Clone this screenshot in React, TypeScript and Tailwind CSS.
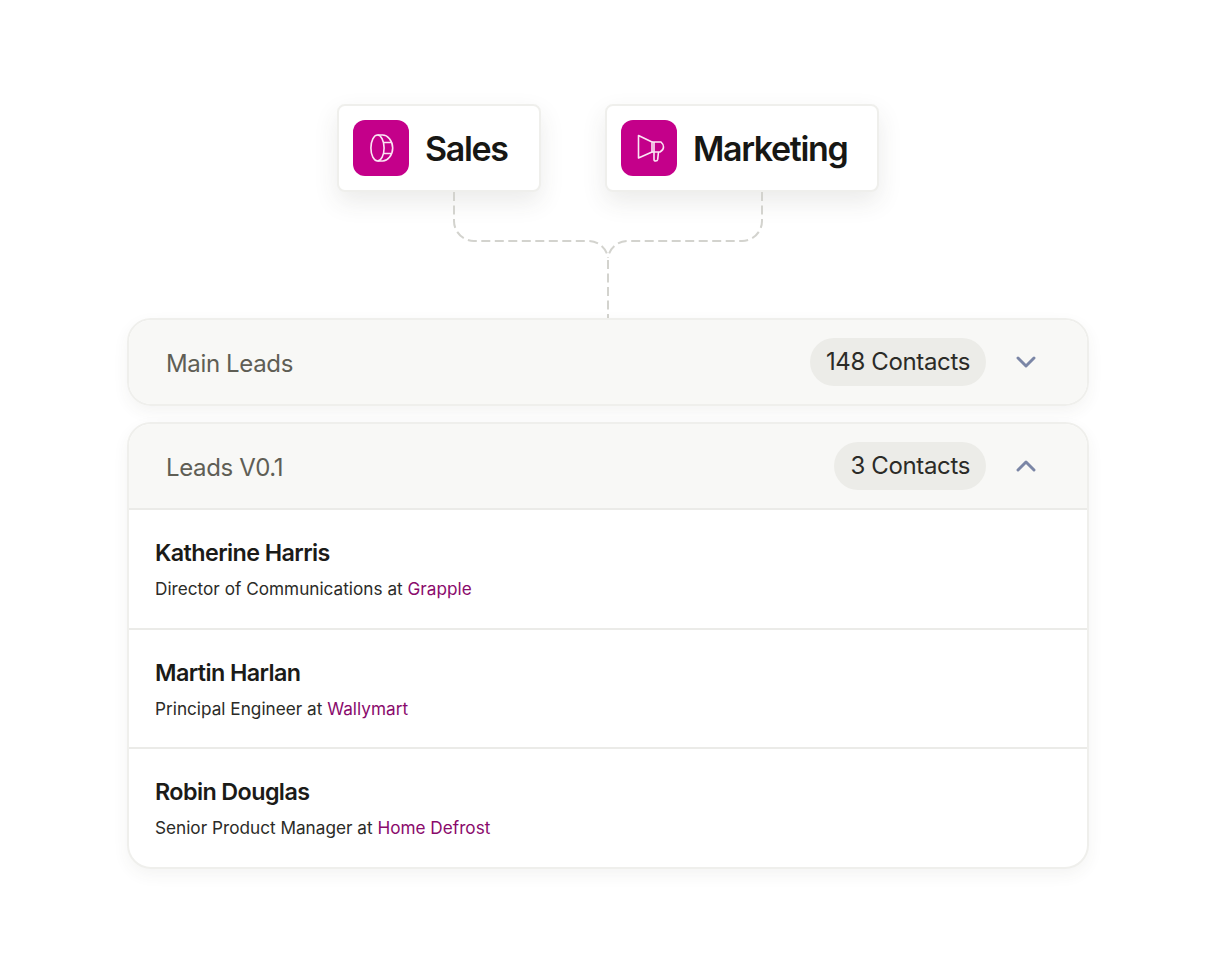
import React from 'react';
import { ChevronDown, ChevronUp } from 'lucide-react';

const people = [
  { name: 'Katherine Harris', role: 'Director of Communications at ', company: 'Grapple' },
  { name: 'Martin Harlan', role: 'Principal Engineer at ', company: 'Wallymart' },
  { name: 'Robin Douglas', role: 'Senior Product Manager at ', company: 'Home Defrost' },
];

const CoinIcon = () => (
  <svg width="28" height="28" viewBox="0 0 28 28" fill="none" stroke="#fbe6f4" strokeWidth="1.6" strokeLinejoin="round">
    <ellipse cx="10.5" cy="14" rx="6.6" ry="13" />
    <path d="M10.5 1h5.200c4.800 0 10 5.600 10 13s-5.200 13-10 13h-5.200" />
    <path d="M16.400 8.500h7.800M16.400 19.500h7.800" />
  </svg>
);

const MegaphoneIcon = () => (
  <svg width="32" height="32" viewBox="0 0 32 32" fill="none" stroke="#fbe6f4" strokeWidth="1.6" strokeLinejoin="round">
    <path d="M5.500 3.500 19 10v10L5.500 26z" />
    <path d="M19 10h9c1.600 1.400 2.500 3.200 2.500 5s-1 3.700-3.500 5h-8" />
    <path d="M21 10v17.500c0 1 .8 1.500 1.800 1.500s1.700-.6 1.900-1.600L25.500 20" />
  </svg>
);

const TeamCard = ({ label, icon, width }: { label: string; icon: React.ReactNode; width: string }) => (
  <div className={`flex h-[88px] items-center gap-4 rounded-lg border-2 border-[#efefec] bg-white pl-[14px] shadow-[0_10px_24px_rgba(60,60,50,0.1)] ${width}`}>
    <div className="flex h-14 w-14 items-center justify-center rounded-xl bg-[#c4008a]">{icon}</div>
    <span className="pt-px text-[34px] leading-none font-semibold tracking-[-0.04em] text-[#171714]">{label}</span>
  </div>
);

const SectionHeader = ({ title, count, open }: { title: string; count: string; open?: boolean }) => (
  <div className="flex h-[84px] items-center justify-between bg-[#f8f8f6] pl-[37px] pr-[45px]">
    <span className="pt-1 text-2xl tracking-[-0.015em] text-[#5f5e55]">{title}</span>
    <div className="flex items-center gap-6">
      <span className="flex h-12 items-center rounded-full bg-[#ecece8] px-4 text-2xl tracking-[-0.015em] text-[#2b2b27]">{count}</span>
      {open ? (
        <ChevronUp className="h-8 w-8 text-[#7b86a6]" strokeWidth={2.2} />
      ) : (
        <ChevronDown className="h-8 w-8 text-[#7b86a6]" strokeWidth={2.2} />
      )}
    </div>
  </div>
);

export default function App() {
  return (
    <div className="flex min-h-[972px] flex-col items-center bg-white pt-[104px] font-['Inter',sans-serif]">
      <div className="flex gap-16">
        <TeamCard label="Sales" icon={<CoinIcon />} width="w-[204px]" />
        <TeamCard label="Marketing" icon={<MegaphoneIcon />} width="w-[274px]" />
      </div>

      <svg width="312" height="126" viewBox="0 0 312 126" fill="none" stroke="#d3d3ce" strokeWidth="2" strokeDasharray="9 4.500">
        <path d="M2 0V29A20 20 0 0 0 22 49H136C147 49 155 57 156 66" />
        <path d="M310 0V29A20 20 0 0 1 290 49H176C165 49 157 57 156 66" />
        <path d="M156 68V126" />
      </svg>

      <div className="flex w-[962px] flex-col gap-4">
        <div className="overflow-hidden rounded-3xl border-2 border-[#efefec] shadow-[0_6px_16px_rgba(60,60,50,0.06)]">
          <SectionHeader title="Main Leads" count="148 Contacts" />
        </div>

        <div className="overflow-hidden rounded-3xl border-2 border-[#efefec] bg-white shadow-[0_6px_16px_rgba(60,60,50,0.06)]">
          <SectionHeader title="Leads V0.1" count="3 Contacts" open />
          {people.map((p) => (
            <div key={p.name} className="flex h-[119.7px] flex-col border-t-2 border-[#ebebe8] pl-[26px] pt-[27px]">
              <span className="text-[23.3px] leading-8 font-semibold tracking-[-0.025em] text-[#1b1b18]">{p.name}</span>
              <span className="mt-2 text-[17.2px] leading-6 text-[#2b2b27]">
                {p.role}
                <span className="text-[#8a0a6c]">{p.company}</span>
              </span>
            </div>
          ))}
        </div>
      </div>
    </div>
  );
}
